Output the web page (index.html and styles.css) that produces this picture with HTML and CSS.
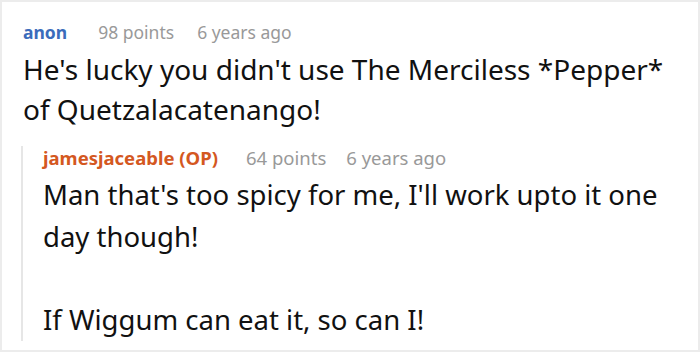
FILE: index.html
```html
<!DOCTYPE html>
<html lang="en">
<head>
  <meta charset="UTF-8" />
  <meta name="viewport" content="width=device-width, initial-scale=1.0"/>
  <title>Comments</title>
  <link rel="stylesheet" href="styles.css">
</head>
<body>
  <div class="frame">
    <div class="comment">
      <div class="meta">
        <span class="author">anon</span>
        <span class="points">98 points</span>
        <span class="time">6 years ago</span>
      </div>
      <p class="text">He's lucky you didn't use The Merciless *Pepper* of Quetzalacatenango!</p>

      <div class="comment reply">
        <div class="meta">
          <span class="author op">jamesjaceable (OP)</span>
          <span class="points">64 points</span>
          <span class="time">6 years ago</span>
        </div>
        <p class="text">Man that's too spicy for me, I'll work upto it one day though!</p>
        <p class="text">If Wiggum can eat it, so can I!</p>
      </div>
    </div>
  </div>
</body>
</html>
```

FILE: styles.css
```css
body {
  margin: 0;
  background: #fff;
  font-family: 'Noto Sans', 'Open Sans', sans-serif;
  color: #111;
}

.frame {
  width: 700px;
  height: 352px;
  box-sizing: border-box;
  border: 2px solid #ececec;
  overflow: hidden;
  padding: 18px 0 0 21px;
}

.meta {
  font-size: 17.5px;
  line-height: 24px;
  color: #999;
  display: flex;
  gap: 23px;
}

.author {
  font-weight: 700;
  color: #3b6cbb;
  margin-right: 8px;
}

.author.op {
  color: #d4581f;
}

.text {
  margin: 0;
  max-width: 660px;
  font-size: 28px;
  line-height: 40px;
  padding-top: 5px;
}

.reply {
  margin-top: 17px;
  margin-left: -2px;
  border-left: 2px solid #e6e6e6;
  padding-left: 20px;
}

.reply .meta {
  font-size: 18.5px;
  gap: 20px;
}

.reply .text {
  font-size: 27.5px;
  line-height: 42px;
  padding-top: 4px;
}

.reply .text + .text {
  margin-top: 41px;
  padding-top: 0;
}
```
